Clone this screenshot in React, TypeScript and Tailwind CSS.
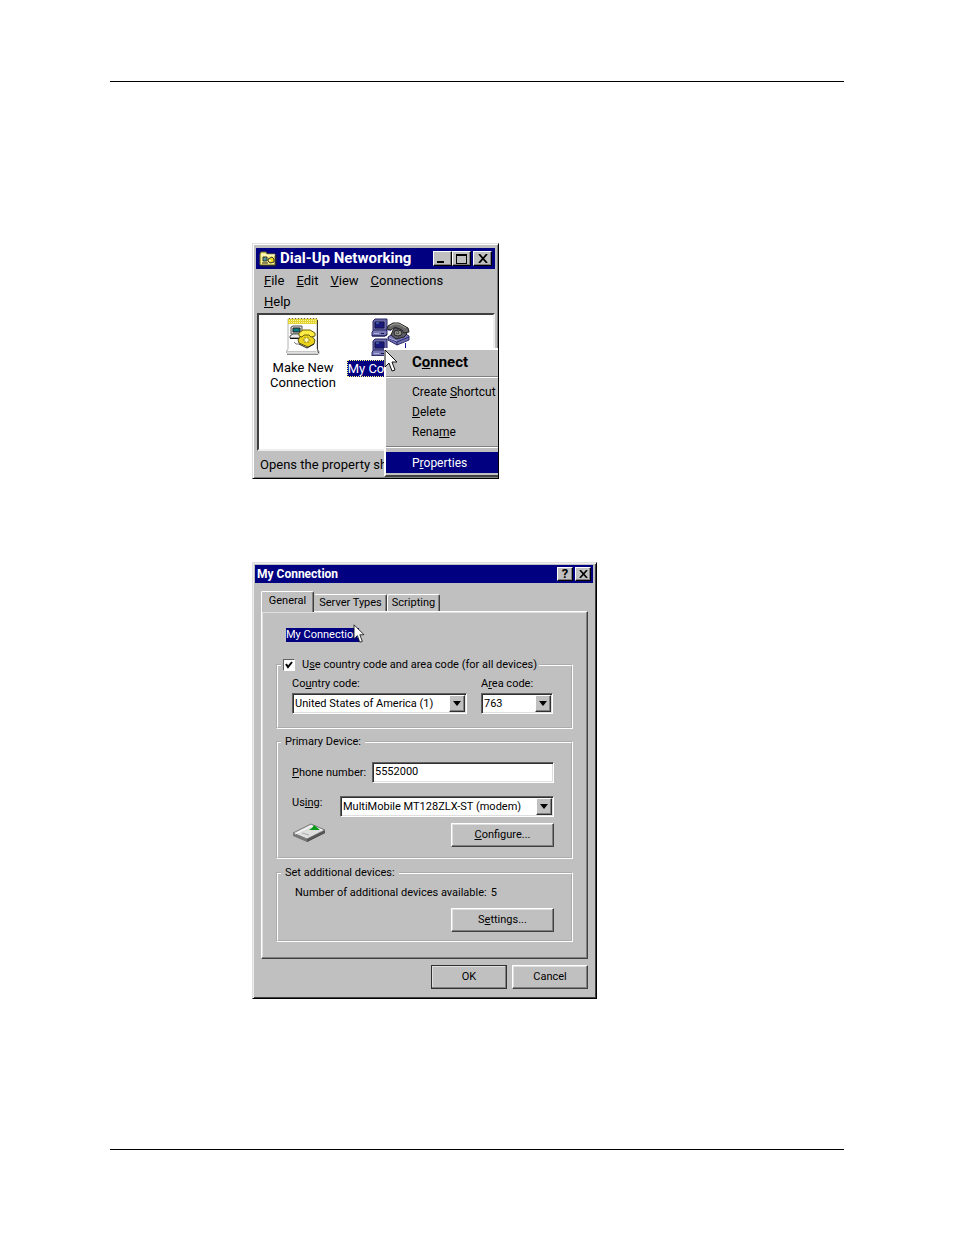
import React from 'react';

const FolderIcon = () => (
  <svg viewBox="0 0 18 16" className="h-4 w-[18px] shrink-0" aria-hidden="true">
    <path d="M1 3l1-2h5l1 2h8v11H1z" fill="#f8f08a" stroke="#6b6420" />
    <path d="M2 4h14" stroke="#fffde0" />
    <path d="M4 6h4v4H4z" fill="#4c9a9a" stroke="#333" />
    <path d="M3 12h6" stroke="#222" />
    <path d="M9 8l4-2 2 2v3l-4 1-2-2z" fill="#f0d818" stroke="#333" />
    <path d="M10 9l2 1" stroke="#fff" />
    <path d="M17 4v11H2" fill="none" stroke="#222" />
  </svg>
);

const NewConnectionIcon = () => (
  <svg viewBox="0 0 34 37" className="h-[37px] w-[34px]" aria-hidden="true">
    <path d="M2 1h29v30l2 2v3H2l-2-2 2-3z" fill="#fdfdfd" stroke="#b4b4b4" />
    <path d="M31.500 2v30l1 3" fill="none" stroke="#333" />
    <path d="M1 36.500h31" stroke="#8a8a8a" />
    <path d="M1 33.500h29l2-2M1 35h31" fill="none" stroke="#c4c4c4" />
    <path d="M2 1h29v5H2z" fill="#e3d331" />
    <path d="M3 2.500h28M3 4.500h28" stroke="#fff7a0" strokeDasharray="1 1" />
    <path d="M3 .5h28" stroke="#77701a" strokeDasharray="1 2" />
    <path d="M5 9l2-1h9v8H5z" fill="#dcdcdc" stroke="#555" />
    <path d="M7 10h7v4H7z" fill="#087c80" stroke="#222" />
    <path d="M4 18l3-2h10v4H4z" fill="#ececec" stroke="#555" />
    <path d="M4 20.500h10" stroke="#111" />
    <path d="M12 22l4-6h8l5 6-1 4-6 3-9-4z" fill="#e9d21b" stroke="#5e5608" />
    <path d="M13 15l4-3h7l5 3v3l-4 1-2-2h-5l-2 2-3-1z" fill="#ffed45" stroke="#6d6209" />
    <path d="M18 20h5v4h-5z" fill="#fff9b4" stroke="#95830c" strokeDasharray="2 1" />
    <path d="M13 26l8 4 7-4" fill="none" stroke="#222" />
    <path d="M8 24l2 2 3 0" fill="none" stroke="#777" />
  </svg>
);

const MonitorShape = () => (
  <g>
    <path d="M1 2l2-2h12v10l-2 2H1z" fill="#6a6aac" stroke="#292965" />
    <path d="M3 3h9v6H3z" fill="#19197f" stroke="#141444" />
    <path d="M4 4h3" stroke="#5f8ec0" />
    <path d="M0 13l2-2h12l1 1v4l-2 1H0z" fill="#7878b4" stroke="#292965" />
    <path d="M2 14.500h5" stroke="#b0b0da" />
    <path d="M9 14.500h3" stroke="#15154f" />
    <path d="M0 17h13l2-2" fill="none" stroke="#15154f" />
  </g>
);

const ConnectionIcon = () => (
  <svg viewBox="0 0 40 38" className="h-[38px] w-10" aria-hidden="true">
    <path d="M15 12h5M34.500 25v8H15" fill="none" stroke="#1818b0" />
    <g transform="translate(1 1)">
      <MonitorShape />
    </g>
    <g transform="translate(1 21)">
      <MonitorShape />
    </g>
    <path d="M17 19l6-4h10l5 3v4l-12 5-9-5z" fill="#7474b4" stroke="#292965" />
    <path d="M17 20l9 4 12-5M26 24v3" fill="none" stroke="#25256a" />
    <path d="M18 20l8 3" stroke="#b7b7df" />
    <path d="M20 17l3-7h8l5 6-3 3-8 2z" fill="#5d5d69" stroke="#222" />
    <path d="M17 8l5-3h6l9 5 1 4-5 1-2-3-7-3-4 3-4-1z" fill="#68686a" stroke="#222" />
    <path d="M19 8l4-2h5l7 4" fill="none" stroke="#aaa99a" />
    <ellipse cx="27" cy="15" rx="4" ry="3" fill="#92928b" stroke="#222" />
    <path d="M25 15h4M27 13v4" stroke="#2d2d39" strokeDasharray="1 1" />
  </svg>
);

const ModemIcon = () => (
  <svg viewBox="0 0 34 20" className="h-5 w-[34px]" aria-hidden="true">
    <path d="M1 11l18-9 14 5v3L15 19 1 13z" fill="#777" />
    <path d="M1 10l18-9 14 6-18 9z" fill="#dedede" stroke="#777" />
    <path d="M3 11l16-8 11 4" fill="none" stroke="#fff" />
    <path d="M22 2l6 5H17l3-2z" fill="#079a17" />
    <path d="M10 10l7 2" stroke="#aaa" />
    <path d="M15 17l18-9M15 18.500l18-9" stroke="#444" />
  </svg>
);

const CursorIcon = () => (
  <svg viewBox="0 0 14 23" className="h-full w-full" aria-hidden="true">
    <path d="M1 1v17l4-4 3 8 3-1-3-8h5z" fill="#fff" stroke="#111" />
  </svg>
);

const CaptionButton = ({ label, className, children }: { label: string; className: string; children: React.ReactNode }) => (
  <button
    type="button"
    aria-label={label}
    className={`flex items-center justify-center border border-t-white border-l-white border-r-black border-b-black bg-[#c0c0c0] shadow-[inset_-1px_-1px_#808080] ${className}`}
  >
    {children}
  </button>
);

const MenuItem = ({ className = 'h-5 text-[12px]', children }: { className?: string; children: React.ReactNode }) => (
  <button type="button" role="menuitem" className={`block w-full pl-[26px] text-left leading-5 whitespace-nowrap ${className}`}>
    {children}
  </button>
);

const MenuLine = () => <div className="my-1 h-0.5 border-t border-b border-t-[#808080] border-b-white" />;

const PushButton = ({ className, children }: { className: string; children: React.ReactNode }) => (
  <button
    type="button"
    className={`h-6 border border-t-white border-l-white border-r-[#404040] border-b-[#404040] bg-[#c0c0c0] text-center shadow-[inset_-1px_-1px_#808080,inset_1px_1px_#dfdfdf] ${className}`}
  >
    {children}
  </button>
);

const DropDown = ({ id, value, className }: { id: string; value: string; className: string }) => (
  <div className={`relative h-[21px] ${className}`}>
    <select
      id={id}
      className="h-full w-full appearance-none rounded-none border border-t-[#606060] border-l-[#606060] border-r-white border-b-white bg-white pl-0.5 text-[11px] leading-[18px] shadow-[inset_1px_1px_#303030,inset_-1px_-1px_#dfdfdf]"
    >
      <option>{value}</option>
    </select>
    <span className="pointer-events-none absolute top-0.5 right-0.5 bottom-0.5 flex w-4 items-center justify-center border border-t-white border-l-white border-r-[#303030] border-b-[#303030] bg-[#c0c0c0] shadow-[inset_-1px_-1px_#808080]">
      <svg viewBox="0 0 8 5" className="h-[5px] w-2" aria-hidden="true">
        <path d="M0 0h8L4 5z" fill="#000" />
      </svg>
    </span>
  </div>
);

const groupClass = 'min-w-0 border-2 border-white px-[3px] [border-style:groove]';

const DialUpWindow = () => (
  <section
    aria-label="Dial-Up Networking"
    className="relative w-[247px] overflow-hidden border border-t-[#dfdfdf] border-l-[#dfdfdf] border-r-black border-b-black bg-[#c0c0c0] px-[3px] pt-1 pb-[3px] text-[13px] shadow-[inset_1px_1px_#fff,inset_-1px_-1px_#808080]"
  >
    <header className="flex h-[21px] items-center bg-[#000080] px-[3px] text-white">
      <FolderIcon />
      <h2 className="ml-[3px] flex-1 text-[15px] font-bold whitespace-nowrap">Dial-Up Networking</h2>
      <div className="flex">
        <CaptionButton label="Minimize" className="h-[15px] w-[19px]">
          <span className="mt-[7px] mr-1 h-0.5 w-[7px] bg-black" />
        </CaptionButton>
        <CaptionButton label="Maximize" className="h-[15px] w-[19px]">
          <span className="h-2.5 w-[11px] border border-t-2 border-black" />
        </CaptionButton>
        <CaptionButton label="Close" className="ml-0.5 h-[15px] w-[19px]">
          <svg viewBox="0 0 10 9" className="h-[9px] w-2.5" aria-hidden="true">
            <path d="M1 0l8 9M9 0L1 9" stroke="#000" strokeWidth="1.800" />
          </svg>
        </CaptionButton>
      </div>
    </header>

    <nav className="flex flex-wrap gap-x-3 pt-px pr-10 pb-px pl-2 leading-[21px]">
      <button type="button"><u>F</u>ile</button>
      <button type="button"><u>E</u>dit</button>
      <button type="button"><u>V</u>iew</button>
      <button type="button"><u>C</u>onnections</button>
      <button type="button"><u>H</u>elp</button>
    </nav>

    <div className="ml-px flex h-[138px] border-2 border-t-[#404040] border-l-[#404040] border-r-[#eee] border-b-[#eee] bg-white pt-[3px] text-center leading-[15px]">
      <div className="flex w-[88px] flex-col items-center gap-[5px]">
        <NewConnectionIcon />
        <span>Make New Connection</span>
      </div>
      <div className="flex w-[88px] flex-col items-center gap-1">
        <ConnectionIcon />
        <span className="border border-dotted border-[#ffff7f] bg-[#000080] whitespace-nowrap text-white">My Connection</span>
      </div>
    </div>

    <footer className="h-6 pl-1 leading-[27px] whitespace-nowrap">Opens the property sheet</footer>

    {/* Context menu, runs off the right edge of the window */}
    <div
      role="menu"
      className="absolute top-[104px] left-[131px] w-[150px] border-2 border-t-white border-l-white border-r-[#404040] border-b-[#404040] bg-[#c0c0c0] pt-0.5 pb-0.5"
    >
      <MenuItem className="h-5 text-[15px] font-bold">C<u>o</u>nnect</MenuItem>
      <MenuLine />
      <MenuItem>Create <u>S</u>hortcut</MenuItem>
      <MenuItem><u>D</u>elete</MenuItem>
      <MenuItem>Rena<u>m</u>e</MenuItem>
      <MenuLine />
      <MenuItem className="h-[21px] bg-[#000080] text-[12px] text-white">P<u>r</u>operties</MenuItem>
    </div>
    <div className="absolute top-[105px] left-[131px] h-[23px] w-3.5">
      <CursorIcon />
    </div>
  </section>
);

const PropertiesDialog = () => (
  <section
    aria-label="My Connection"
    className="w-[345px] border border-t-[#dfdfdf] border-l-[#dfdfdf] border-r-black border-b-black bg-[#c0c0c0] px-0.5 pt-0.5 pb-[9px] text-[11px] leading-[14px] shadow-[inset_1px_1px_#eee,inset_-1px_-1px_#404040]"
  >
    <header className="mr-px flex h-[18px] items-center bg-[#000080] pr-0.5 pl-0.5 text-white">
      <h2 className="flex-1 text-[12px] font-bold">My Connection</h2>
      <div className="flex gap-0.5">
        <CaptionButton label="Help" className="h-3.5 w-4 text-[13px] font-bold text-black">?</CaptionButton>
        <CaptionButton label="Close" className="h-3.5 w-4">
          <svg viewBox="0 0 10 9" className="h-2 w-[9px]" aria-hidden="true">
            <path d="M1 0l8 9M9 0L1 9" stroke="#000" strokeWidth="1.800" />
          </svg>
        </CaptionButton>
      </div>
    </header>

    <div className="px-1.5 pt-2">
      <div role="tablist" className="flex items-end">
        <button
          type="button"
          role="tab"
          aria-selected="true"
          className="relative -mb-px h-[21px] w-[53px] rounded-t-xs border border-b-0 border-t-white border-l-white border-r-[#404040] bg-[#c0c0c0] pb-0.5 shadow-[inset_-1px_0_#808080]"
        >
          General
        </button>
        <button
          type="button"
          role="tab"
          aria-selected="false"
          className="h-[17px] w-[73px] rounded-t-xs border border-b-0 border-t-white border-l-[#c0c0c0] border-r-[#404040] shadow-[inset_-1px_0_#808080]"
        >
          Server Types
        </button>
        <button
          type="button"
          role="tab"
          aria-selected="false"
          className="h-[17px] w-[53px] rounded-t-xs border border-b-0 border-t-white border-l-white border-r-[#404040] shadow-[inset_-1px_0_#808080]"
        >
          Scripting
        </button>
      </div>

      <div
        role="tabpanel"
        className="border border-t-white border-l-white border-r-[#404040] border-b-[#404040] px-3.5 py-4 shadow-[inset_-1px_-1px_#808080,inset_1px_1px_#dfdfdf]"
      >
        <div className="relative mb-4 ml-2.5 w-fit bg-[#000080] text-white">
          My Connection
          <div className="absolute -top-1 left-[67px] h-[19px] w-3">
            <CursorIcon />
          </div>
        </div>

        <fieldset className={`${groupClass} pb-[13px]`}>
          <legend className="px-0.5">
            <label className="flex h-3.5 items-center gap-[7px]">
              <span className="relative h-3 w-3">
                <input
                  type="checkbox"
                  defaultChecked
                  className="block h-3 w-3 appearance-none border border-t-[#606060] border-l-[#606060] border-r-white border-b-white bg-white"
                />
                <svg viewBox="0 0 12 12" className="pointer-events-none absolute inset-0 h-3 w-3" aria-hidden="true">
                  <path d="M3 5l2 3 4-5" fill="none" stroke="#000" strokeWidth="2" />
                </svg>
              </span>
              <span>U<u>s</u>e country code and area code (for all devices)</span>
            </label>
          </legend>
          <div className="flex gap-3.5 pt-[5px] pl-[11px]">
            <div className="flex flex-col gap-0.5">
              <label htmlFor="country">Co<u>u</u>ntry code:</label>
              <DropDown id="country" value="United States of America (1)" className="w-[175px]" />
            </div>
            <div className="flex flex-col gap-0.5">
              <label htmlFor="area">A<u>r</u>ea code:</label>
              <DropDown id="area" value="763" className="w-[72px]" />
            </div>
          </div>
        </fieldset>

        <fieldset className={`${groupClass} mt-1.5 pb-2.5`}>
          <legend className="px-1">Primary Device:</legend>
          <div className="pt-[13px] pr-3.5 pl-[11px]">
            <div className="flex items-center">
              <label htmlFor="phone" className="w-20"><u>P</u>hone number:</label>
              <input
                id="phone"
                type="text"
                defaultValue="5552000"
                className="h-[21px] min-w-0 flex-1 border border-t-[#606060] border-l-[#606060] border-r-white border-b-white bg-white pb-0.5 pl-0.5 shadow-[inset_1px_1px_#303030,inset_-1px_-1px_#dfdfdf]"
              />
            </div>
            <div className="mt-[13px] flex">
              <label htmlFor="using" className="w-12">Us<u>ing</u>:</label>
              <DropDown id="using" value="MultiMobile MT128ZLX-ST (modem)" className="flex-1" />
            </div>
            <div className="mt-1.5 flex items-start justify-between">
              <ModemIcon />
              <PushButton className="w-[103px]"><u>C</u>onfigure...</PushButton>
            </div>
          </div>
        </fieldset>

        <fieldset className={`${groupClass} mt-[7px] pb-2`}>
          <legend className="px-1">Set additional devices:</legend>
          <div className="pt-1.5 pr-3.5 pl-3.5">
            <p>Number of additional devices available:<span className="ml-1">5</span></p>
            <PushButton className="mt-2 ml-auto block w-[103px]">S<u>e</u>ttings...</PushButton>
          </div>
        </fieldset>
      </div>

      <div className="mt-1.5 flex justify-end gap-[5px]">
        <PushButton className="w-[76px] outline -outline-offset-1 outline-[#303030]">OK</PushButton>
        <PushButton className="w-[76px]">Cancel</PushButton>
      </div>
    </div>
  </section>
);

const App: React.FC = () => {
  return (
    <div className="bg-white px-[110px] pt-[81px] pb-[85px] font-['Roboto',sans-serif] text-black">
      <main className="border-t border-b border-black pt-[161px] pb-[150px] pl-[142px]">
        <DialUpWindow />
        <div className="mt-[83px]">
          <PropertiesDialog />
        </div>
      </main>
    </div>
  );
};

export default App;
